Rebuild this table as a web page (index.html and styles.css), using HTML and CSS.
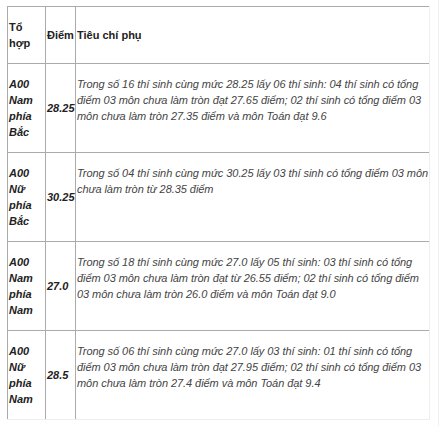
FILE: index.html
```html
<!DOCTYPE html>
<html lang="vi">
<head>
<meta charset="utf-8">
<link rel="stylesheet" href="styles.css">
</head>
<body>
<div class="page">
<table class="tbl">
<colgroup><col class="c1"><col class="c2"><col class="c3"></colgroup>
<tr class="head">
<td class="mid"><p><b>Tổ hợp</b></p></td>
<td class="mid"><p><b>Điểm</b></p></td>
<td class="mid"><p><b>Tiêu chí phụ</b></p></td>
</tr>
<tr>
<td class="mid"><p><b><i>A00 Nam phía Bắc</i></b></p></td>
<td class="mid"><p><b><i>28.25</i></b></p></td>
<td class="top"><p><i>Trong số 16 thí sinh cùng mức 28.25 lấy 06 thí sinh: 04 thí sinh có tổng điểm 03 môn chưa làm tròn đạt 27.65 điểm; 02 thí sinh có tổng điểm 03 môn chưa làm tròn 27.35 điểm và môn Toán đạt 9.6</i></p></td>
</tr>
<tr>
<td class="mid"><p><b><i>A00 Nữ phía Bắc</i></b></p></td>
<td class="mid"><p><b><i>30.25</i></b></p></td>
<td class="top"><p><i>Trong số 04 thí sinh cùng mức 30.25 lấy 03 thí sinh có tổng điểm 03 môn chưa làm tròn từ 28.35 điểm</i></p></td>
</tr>
<tr>
<td class="mid"><p><b><i>A00 Nam phía Nam</i></b></p></td>
<td class="mid"><p><b><i>27.0</i></b></p></td>
<td class="top"><p><i>Trong số 18 thí sinh cùng mức 27.0 lấy 05 thí sinh: 03 thí sinh có tổng điểm 03 môn chưa làm tròn đạt từ 26.55 điểm; 02 thí sinh có tổng điểm 03 môn chưa làm tròn 26.0 điểm và môn Toán đạt 9.0</i></p></td>
</tr>
<tr>
<td class="mid"><p><b><i>A00 Nữ phía Nam</i></b></p></td>
<td class="mid"><p><b><i>28.5</i></b></p></td>
<td class="top"><p><i>Trong số 06 thí sinh cùng mức 27.0 lấy 03 thí sinh: 01 thí sinh có tổng điểm 03 môn chưa làm tròn đạt 27.95 điểm; 02 thí sinh có tổng điểm 03 môn chưa làm tròn 27.4 điểm và môn Toán đạt 9.4</i></p></td>
</tr>
</table>
</div>
</body>
</html>
```
FILE: styles.css
```css
html, body {
  margin: 0;
  padding: 0;
  background: #ffffff;
}
.page {
  width: 439px;
  height: 426px;
  box-sizing: border-box;
  padding: 6px 0 0 7px;
  border-right: 1px solid #f0f0f0;
  font-family: "Liberation Sans", Arial, sans-serif;
  font-size: 11px;
  line-height: 16px;
  color: #333333;
}
.tbl {
  border-collapse: separate;
  border-spacing: 0;
  width: 423px;
  table-layout: fixed;
  border-right: 1px solid #eeeeee;
  border-bottom: 1px solid #eeeeee;
}
.c1 { width: 38px; }
.c2 { width: 30px; }
.tbl td {
  border-top: 1px solid #ababab;
  border-left: 1px solid #ababab;
  padding: 0 0 0 1px;
}
.tbl td.mid { vertical-align: middle; }
.tbl td.top { vertical-align: top; }
.tbl p {
  margin: 12px 0;
}
b { font-weight: bold; color: #222222; }
i { font-style: italic; }
.top i { color: #444444; letter-spacing: -0.06px; }
```
